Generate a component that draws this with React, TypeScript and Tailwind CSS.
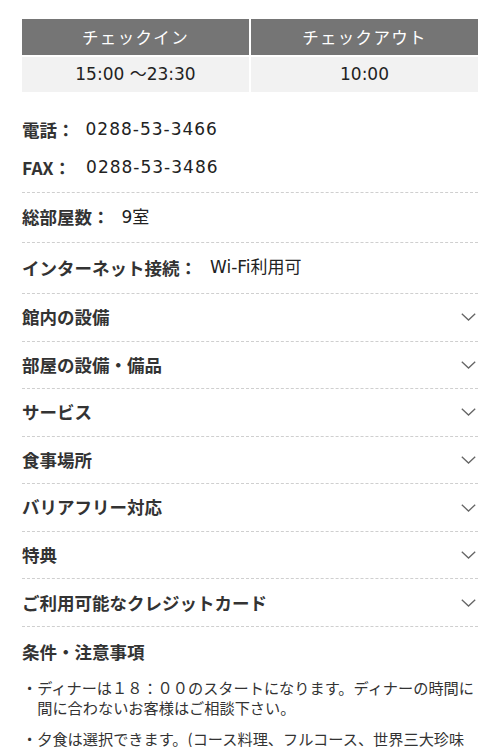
import React from "react";

const Chevron = () => (
  <svg width="15" height="8" viewBox="0 0 15 8" fill="none" className="shrink-0">
    <path d="M0.8 0.8 L7.5 7 L14.2 0.8" stroke="#666" strokeWidth="1.3" />
  </svg>
);

const accordions = [
  "館内の設備",
  "部屋の設備・備品",
  "サービス",
  "食事場所",
  "バリアフリー対応",
  "特典",
  "ご利用可能なクレジットカード",
];

const num = { fontFamily: '"DejaVu Sans", "Noto Sans CJK JP", sans-serif' };

export default function App() {
  return (
    <div
      className="w-[500px] h-[747px] overflow-hidden bg-white px-[22px] pt-[19px] text-[#222]"
      style={{ fontFamily: '"Noto Sans CJK JP", "Noto Sans", sans-serif' }}
    >
      {/* table */}
      <div className="grid grid-cols-[227px_227px] gap-[2px] w-[456px]">
        <div className="h-[36px] bg-[#757575] text-white text-[16.5px] flex items-center justify-center tracking-[0.08em]">
          チェックイン
        </div>
        <div className="h-[36px] bg-[#757575] text-white text-[16.5px] flex items-center justify-center tracking-[0.08em]">
          チェックアウト
        </div>
        <div className="h-[35px] bg-[#f2f2f2] text-[17px] flex items-center justify-center" style={num}>
          15:00 ～23:30
        </div>
        <div className="h-[35px] bg-[#f2f2f2] text-[17px] flex items-center justify-center" style={num}>
          10:00
        </div>
      </div>

      <div className="mt-[19px] pb-[5px] border-b border-dashed border-[#cfcfcf]">
        <div className="h-[38px] flex items-center text-[17px]">
          <span className="font-bold text-[#333] text-[17.5px]">電話：</span>
          <span className="ml-[11px] tracking-[1px]" style={num}>0288-53-3466</span>
        </div>
        <div className="h-[38px] flex items-center text-[17px]">
          <span className="font-bold text-[#333] text-[17.5px]">FAX：</span>
          <span className="ml-[15px] tracking-[1px]" style={num}>0288-53-3486</span>
        </div>
      </div>

      <div className="h-[50px] flex items-center border-b border-dashed border-[#cfcfcf] text-[17px]">
        <span className="font-bold text-[#333] text-[17.5px]">総部屋数：</span>
        <span className="ml-[12px]" style={num}>9室</span>
      </div>
      <div className="h-[51px] flex items-center border-b border-dashed border-[#cfcfcf] text-[17px]">
        <span className="font-bold text-[#333] text-[17.5px]">インターネット接続：</span>
        <span className="ml-[13px]" style={num}>Wi-Fi利用可</span>
      </div>

      {accordions.map((a) => (
        <div
          key={a}
          className="h-[47.57px] flex items-center justify-between border-b border-dashed border-[#cfcfcf] pr-[2px]"
        >
          <span className="font-bold text-[#333] text-[17.5px]">{a}</span>
          <Chevron />
        </div>
      ))}

      <div className="h-[50px] flex items-center">
        <span className="font-bold text-[#333] text-[17.5px]">条件・注意事項</span>
      </div>
      <ul className="text-[15.2px] leading-[20px] text-[#333]">
        <li className="pl-[15.2px] -indent-[15.2px] mb-[11px]">
          ・ディナーは１８：００のスタートになります。ディナーの時間に間に合わないお客様はご相談下さい。
        </li>
        <li className="pl-[15.2px] -indent-[15.2px]">
          ・夕食は選択できます。(コース料理、フルコース、世界三大珍味
        </li>
      </ul>
    </div>
  );
}
